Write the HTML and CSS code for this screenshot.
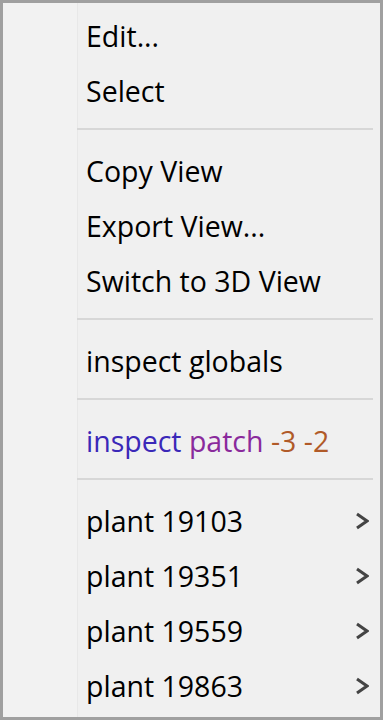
FILE: index.html
```html
<!DOCTYPE html>
<html lang="en">
<head>
    <meta charset="UTF-8">
    <meta name="viewport" content="width=device-width, initial-scale=1.0">
    <title>Context menu</title>
    <link rel="stylesheet" href="styles.css">
</head>
<body>
    <!-- Context menu -->
    <div class="menu">
        <div class="item">Edit...</div>
        <div class="item">Select</div>
        <div class="sep"></div>
        <div class="item">Copy View</div>
        <div class="item">Export View...</div>
        <div class="item">Switch to 3D View</div>
        <div class="sep"></div>
        <div class="item">inspect globals</div>
        <div class="sep"></div>
        <div class="item"><span class="cmd">inspect</span>&nbsp;<span class="agent">patch</span>&nbsp;<span class="num">-3 -2</span></div>
        <div class="sep"></div>
        <div class="item sub">plant 19103<svg class="arrow" viewBox="0 0 14 18"><path d="M2 2 L12 9 L2 16"/></svg></div>
        <div class="item sub">plant 19351<svg class="arrow" viewBox="0 0 14 18"><path d="M2 2 L12 9 L2 16"/></svg></div>
        <div class="item sub">plant 19559<svg class="arrow" viewBox="0 0 14 18"><path d="M2 2 L12 9 L2 16"/></svg></div>
        <div class="item sub">plant 19863<svg class="arrow" viewBox="0 0 14 18"><path d="M2 2 L12 9 L2 16"/></svg></div>
    </div>
</body>
</html>
```

FILE: styles.css
```css
/* General Styling */
body {
    margin: 0;
    padding: 0;
    font-family: "Open Sans", "Noto Sans", sans-serif;
}
.menu {
    width: 383px;
    height: 720px;
    box-sizing: border-box;
    border: 3px solid #a0a0a0;
    background-color: #f0f0f0;
    padding: 3px 0 6px;
    background-image: linear-gradient(to right, #f2f2f2 74px, #e8e8e8 74px, #e8e8e8 75px, #f0f0f0 75px);
}
.item {
    height: 55px;
    box-sizing: border-box;
    padding: 4px 11px 0 83px;
    display: flex;
    align-items: center;
    font-size: 28.5px;
    color: #000;
    white-space: nowrap;
}
.sub {
    justify-content: space-between;
}
.arrow {
    width: 14px;
    height: 18px;
    fill: none;
    stroke: #444;
    stroke-width: 3;
}
.sep {
    height: 25px;
    display: flex;
    align-items: center;
    padding: 0 7px 0 74px;
}
.sep::after {
    content: "";
    flex: 1;
    height: 2px;
    background-color: #d7d7d7;
}
.cmd {
    color: #3a28b8;
}
.agent {
    color: #8a2a9c;
}
.num {
    color: #b05a28;
}
```
